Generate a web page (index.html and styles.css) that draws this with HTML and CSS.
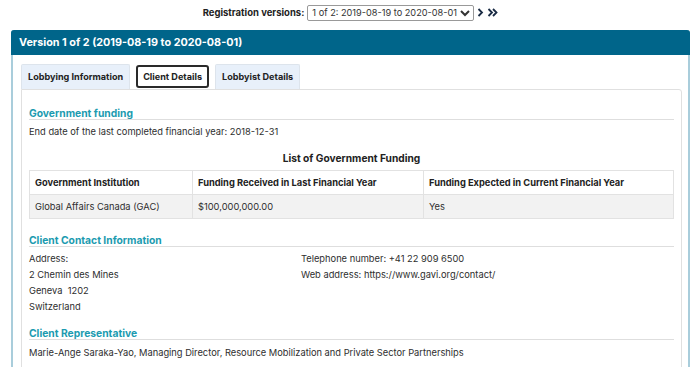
FILE: index.html
```html
<!DOCTYPE html>
<html lang="en">
<head>
  <meta charset="UTF-8">
  <title>Registration - Client Details</title>
  <link rel="stylesheet" href="styles.css">
</head>
<body>
  <div class="version-bar">
    <label for="versionSelect">Registration versions:</label>
    <select id="versionSelect" class="version-select">
      <option>1 of 2: 2019-08-19 to 2020-08-01</option>
      <option>2 of 2: 2020-08-01 to present</option>
    </select>
    <a class="nav-arrow" href="#">
      <svg width="7" height="9" viewBox="0 0 7 9"><path d="M1.5 1 5 4.5 1.5 8" fill="none" stroke="#1a2b44" stroke-width="1.8"/></svg>
    </a>
    <a class="nav-arrow" href="#">
      <svg width="11" height="9" viewBox="0 0 11 9"><path d="M1.5 1 5 4.5 1.5 8M6 1 9.5 4.5 6 8" fill="none" stroke="#1a2b44" stroke-width="1.8"/></svg>
    </a>
  </div>

  <div class="panel">
    <div class="panel-heading">Version 1 of 2 (2019-08-19 to 2020-08-01)</div>
    <div class="panel-body">
      <ul class="tabs">
        <li class="tab">Lobbying Information</li>
        <li class="tab active">Client Details</li>
        <li class="tab">Lobbyist Details</li>
      </ul>
      <div class="tab-content">
        <h3 class="section-title">Government funding</h3>
        <p>End date of the last completed financial year: 2018-12-31</p>

        <div class="table-caption">List of Government Funding</div>
        <table class="funding-table">
          <thead>
            <tr>
              <th>Government Institution</th>
              <th>Funding Received in Last Financial Year</th>
              <th>Funding Expected in Current Financial Year</th>
            </tr>
          </thead>
          <tbody>
            <tr>
              <td>Global Affairs Canada (GAC)</td>
              <td>$100,000,000.00</td>
              <td>Yes</td>
            </tr>
          </tbody>
        </table>

        <h3 class="section-title">Client Contact Information</h3>
        <div class="contact-grid">
          <div>
            Address:<br>
            2 Chemin des Mines<br>
            Geneva&nbsp; 1202<br>
            Switzerland
          </div>
          <div>
            Telephone number: +41 22 909 6500<br>
            Web address: https://www.gavi.org/contact/
          </div>
        </div>

        <h3 class="section-title">Client Representative</h3>
        <p>Marie-Ange Saraka-Yao, Managing Director, Resource Mobilization and Private Sector Partnerships</p>
      </div>
    </div>
  </div>
</body>
</html>
```

FILE: styles.css
```css
:root {
  --text-color: #2e2e2e;
  --heading-blue: #00658a;
  --section-teal: #1c9bb0;
  --rule-color: #dedede;
  --tab-bg: #e8f0fa;
}
body {
  font-family: 'Inter', sans-serif;
  font-size: 9.3px;
  line-height: 16px;
  color: var(--text-color);
  margin: 0;
  padding: 4px 10px 0 11px;
  background: #fff;
}
.version-bar {
  display: flex;
  justify-content: center;
  align-items: center;
  gap: 3px;
  height: 17px;
}
.version-bar label {
  font-weight: 700;
  font-size: 9.5px;
  color: #222;
}
.version-select {
  font-family: 'Inter', sans-serif;
  font-size: 9.2px;
  color: #333;
  height: 16px;
  padding: 0;
  border: 1px solid #999;
  border-radius: 2px;
  background: #fff;
}
.nav-arrow {
  display: flex;
  align-items: center;
}
.panel {
  margin-top: 9px;
  border-left: 2px solid #a9cddb;
  border-right: 2px solid #a9cddb;
  border-radius: 3px 3px 0 0;
}
.panel-heading {
  background: var(--heading-blue);
  color: #fff;
  font-weight: 700;
  font-size: 10.8px;
  height: 25px;
  line-height: 25px;
  padding: 0 8px;
  margin: 0 -2px;
  border-radius: 3px 3px 0 0;
}
.panel-body {
  padding: 9px 6px 0 8px;
}
.tabs {
  display: flex;
  gap: 6px;
  list-style: none;
  margin: 0;
  padding: 0;
}
.tab {
  background: var(--tab-bg);
  border: 1px solid #dde4ec;
  border-bottom: none;
  padding: 0 6px;
  height: 24px;
  line-height: 24px;
  font-weight: 700;
  font-size: 9.1px;
  color: #222;
  border-radius: 2px 2px 0 0;
}
.tab.active {
  background: #fff;
  border: 2px solid #2a2a2a;
  border-radius: 3px;
  height: 19px;
  line-height: 19px;
  margin-top: 1px;
  padding: 0 5px;
}
.tab-content {
  border: 1px solid #e0e0e0;
  border-radius: 0 3px 0 0;
  padding: 17px 7px 8px 7px;
}
.section-title {
  color: var(--section-teal);
  font-size: 10.3px;
  font-weight: 700;
  line-height: 12px;
  margin: 0 0 4px 0;
  border-bottom: 1px solid var(--rule-color);
}
p {
  margin: 0;
}
.tab-content > p {
  margin-bottom: 10px;
}
.table-caption {
  text-align: center;
  font-weight: 700;
  font-size: 10.2px;
  color: #222;
  margin-bottom: 4px;
}
.funding-table {
  width: 100%;
  border-collapse: collapse;
  margin-bottom: 15px;
}
.funding-table th,
.funding-table td {
  border: 1px solid #e2e2e2;
  text-align: left;
  padding: 0 5px;
  height: 23px;
  line-height: 16px;
}
.funding-table th {
  font-weight: 700;
  color: #222;
}
.funding-table td {
  background: #f2f2f2;
}
.funding-table th:nth-child(1) { width: 152px; }
.funding-table th:nth-child(2) { width: 220px; }
.contact-grid {
  display: grid;
  grid-template-columns: 272px 1fr;
  margin-bottom: 12px;
}
.contact-grid + .section-title + p {
  margin-top: 5px;
}
```
